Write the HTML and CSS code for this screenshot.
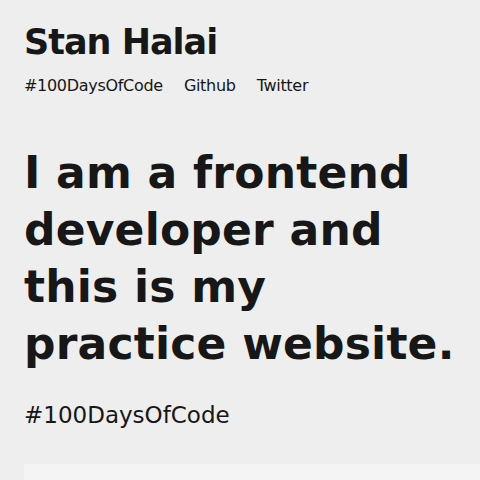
FILE: index.html
```html
<!DOCTYPE html>
<html>
<head>
<meta charset="utf-8">
<title>Stan Halai</title>
<link rel="stylesheet" href="styles.css">
</head>
<body>
<div class="page">
  <header class="header">
    <h1 class="name">Stan Halai</h1>
    <nav class="nav">
      <a class="nav-link" href="#">#100DaysOfCode</a>
      <a class="nav-link" href="#">Github</a>
      <a class="nav-link" href="#">Twitter</a>
    </nav>
  </header>
  <main class="hero">
    <h2 class="headline">I am a frontend developer and this is my practice website.</h2>
    <p class="tag">#100DaysOfCode</p>
  </main>
  <section class="panel"></section>
</div>
</body>
</html>
```
FILE: styles.css
```css
html, body {
  margin: 0;
  padding: 0;
  background: #eeeeee;
  overflow: hidden;
}
.page {
  height: 480px;
  padding: 20px 24px 0 24px;
  box-sizing: border-box;
  font-family: "DejaVu Sans", sans-serif;
  color: #171717;
  display: flex;
  flex-direction: column;
}
.name {
  margin: 0;
  font-size: 35px;
  line-height: 44px;
  font-weight: 700;
  letter-spacing: -1px;
}
.nav {
  margin-top: 12px;
  display: flex;
  gap: 21px;
}
.nav-link {
  font-size: 16px;
  line-height: 20px;
  letter-spacing: -0.3px;
  color: #171717;
  text-decoration: none;
}
.headline {
  margin: 48px -24px 0 0;
  font-size: 44px;
  line-height: 57px;
  font-weight: 700;
  letter-spacing: 0.2px;
}
.tag {
  margin: 28px 0 0 0;
  font-size: 23px;
  line-height: 30px;
}
.panel {
  margin-top: 34px;
  margin-right: -24px;
  flex: 1;
  background: #f4f4f4;
}
```
